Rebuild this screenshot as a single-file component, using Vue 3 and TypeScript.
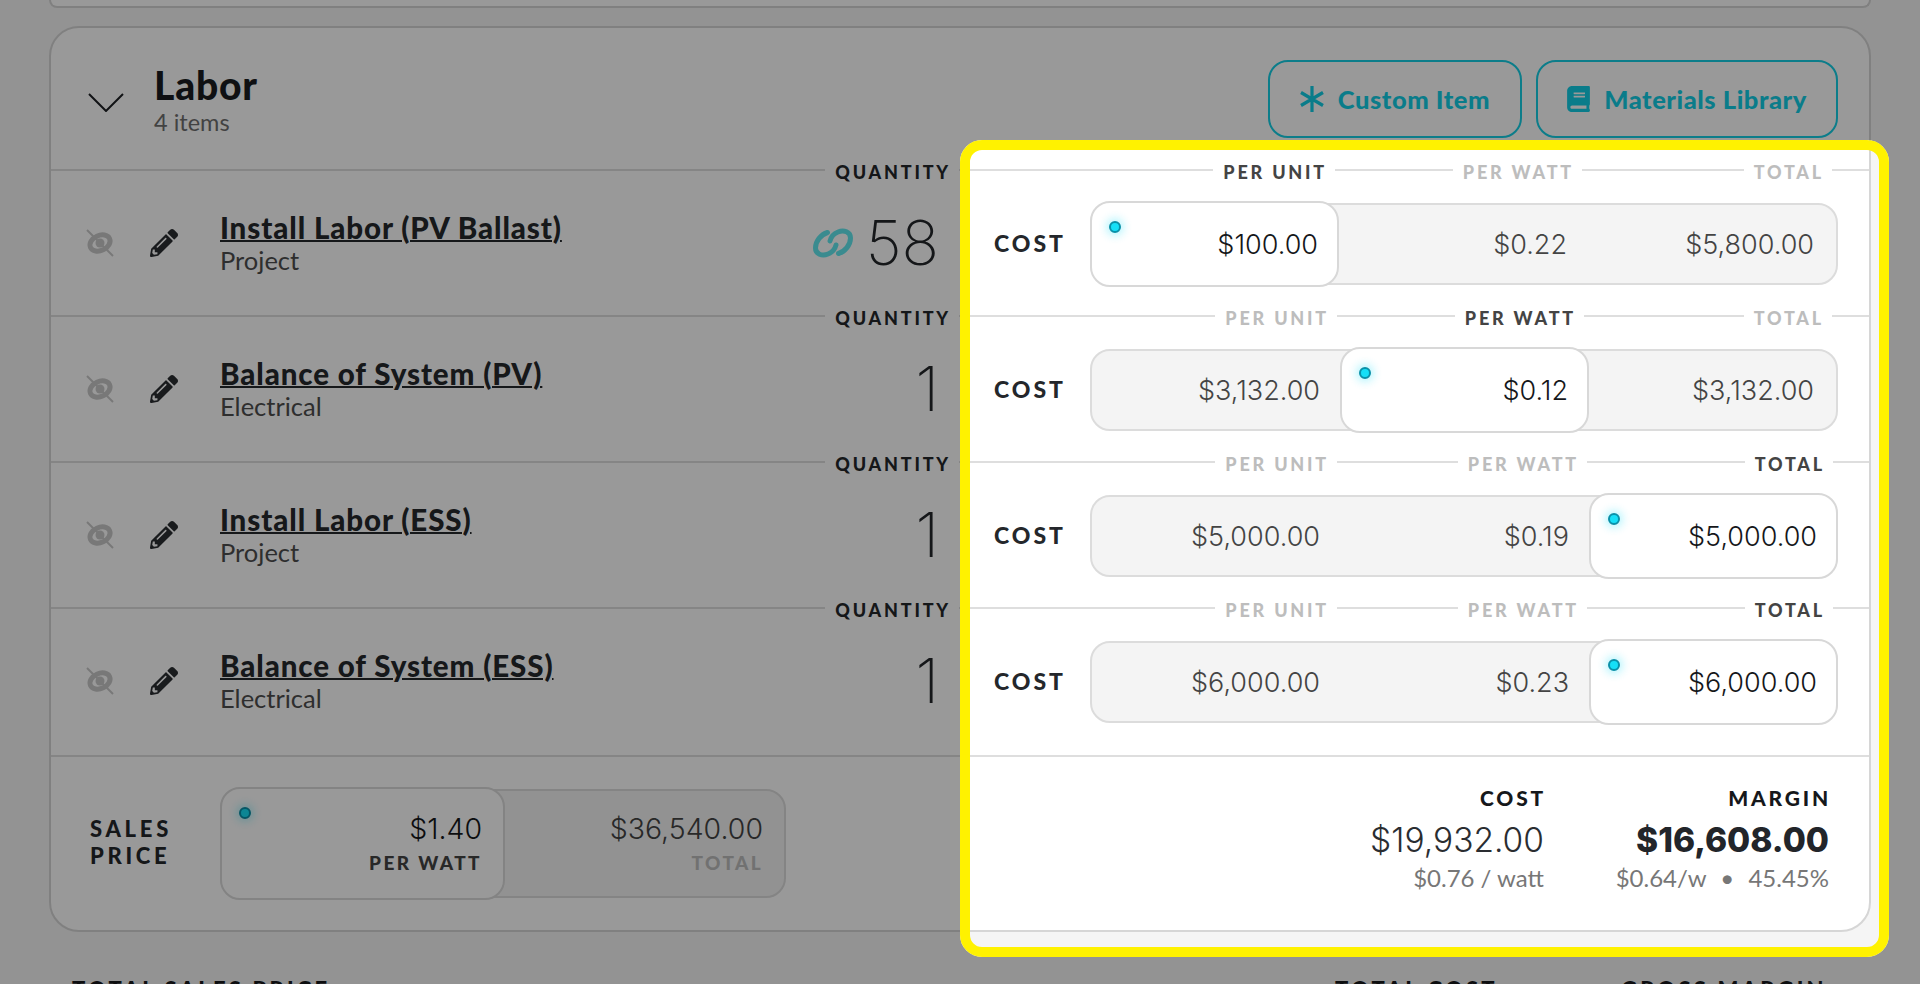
<template>
  <div class="page">
    <div class="prev-card"></div>

    <section class="labor-card">
      <header class="card-head">
        <svg class="chevron" viewBox="0 0 36 19" fill="none" stroke="#1d2024" stroke-width="2"><path d="M1 1l17 17L35 1" /></svg>
        <div class="head-titles">
          <h2>Labor</h2>
          <div class="head-count">4 items</div>
        </div>
        <div class="head-actions">
          <button class="outline-btn custom-btn">
            <svg class="asterisk" viewBox="0 0 24 26" fill="none" stroke="currentColor" stroke-width="3.2"><path d="M12 0v26M1 6.5l22 13M23 6.5l-22 13" /></svg>
            Custom Item
          </button>
          <button class="outline-btn library-btn">
            <svg class="book" viewBox="0 0 448 512" fill="currentColor"><path d="M448 360V24c0-13.3-10.7-24-24-24H96C43 0 0 43 0 96v320c0 53 43 96 96 96h328c13.3 0 24-10.7 24-24v-16c0-7.5-3.5-14.3-8.9-18.7-4.2-15.4-4.2-59.3 0-74.7 5.4-4.3 8.9-11.1 8.9-18.6zM128 134c0-3.3 2.7-6 6-6h212c3.3 0 6 2.7 6 6v20c0 3.3-2.7 6-6 6H134c-3.3 0-6-2.7-6-6v-20zm0 64c0-3.3 2.7-6 6-6h212c3.3 0 6 2.7 6 6v20c0 3.3-2.7 6-6 6H134c-3.3 0-6-2.7-6-6v-20zm253.4 250H96c-17.7 0-32-14.3-32-32 0-17.6 14.4-32 32-32h285.4c-1.9 17.1-1.9 46.9 0 64z" /></svg>
            Materials Library
          </button>
        </div>
      </header>

      <div class="items">
        <div v-for="item in items" :key="item.name" class="item">
          <div class="band">
            <div class="band-col qty-col"><span class="seg"></span><span class="band-label dark">QUANTITY</span></div>
            <div
              v-for="(label, i) in priceLabels"
              :key="label"
              class="band-col"
              :style="{ width: bandWidths[item.active][i] + 'px' }"
            >
              <span class="seg"></span>
              <span class="band-label" :class="{ active: i === item.active }">{{ label }}</span>
            </div>
            <span class="seg"></span>
          </div>

          <div class="item-body">
            <div class="item-left">
              <svg class="eye-icon" viewBox="0 0 28 28" fill="none" stroke="#c9c9c9">
                <ellipse cx="14" cy="14" rx="10.500" ry="7.500" stroke-width="5" transform="rotate(-25 14 14)" />
                <circle cx="14" cy="14" r="4.500" fill="#c9c9c9" stroke="none" />
                <path d="M1 1l26 26" stroke-width="2" />
              </svg>
              <svg class="pencil-icon" viewBox="0 0 512 512" fill="#2a2d31"><path d="M497.9 142.1l-46.1 46.1c-4.7 4.7-12.3 4.7-17 0l-111-111c-4.7-4.7-4.7-12.3 0-17l46.1-46.1c18.7-18.7 49.1-18.7 67.9 0l60.1 60.1c18.8 18.7 18.8 49.1 0 67.9zM284.2 99.8L21.6 362.4.4 483.9c-2.9 16.4 11.4 30.6 27.8 27.8l121.5-21.3 262.6-262.6c4.7-4.7 4.7-12.3 0-17l-111-111c-4.8-4.7-12.4-4.7-17.1 0zM124.1 339.9c-5.5-5.5-5.5-14.3 0-19.8l154-154c5.5-5.5 14.3-5.5 19.8 0s5.5 14.3 0 19.8l-154 154c-5.5 5.5-14.3 5.5-19.8 0zM88 424h48v36.3l-64.5 11.3-31.1-31.1L51.7 376H88v48z" /></svg>
              <div class="item-titles">
                <a class="item-name">{{ item.name }}</a>
                <div class="item-type">{{ item.type }}</div>
              </div>
              <svg v-if="item.linked" class="link-icon" viewBox="0 0 40 30" fill="none" stroke="#62e8ee" stroke-width="5" stroke-linecap="round">
                <path d="M14.500 4.500C8 6.500 2.500 13 2.500 20c0 6 6.500 8.500 12.500 6 4-1.500 7-5 8-9" />
                <path d="M14.500 4.500C8 6.500 2.500 13 2.500 20c0 6 6.500 8.500 12.500 6 4-1.500 7-5 8-9" transform="rotate(180 20 15)" />
              </svg>
              <div class="qty-value">{{ item.qty }}</div>
            </div>

            <div class="item-price">
              <div class="cost-label">COST</div>
              <div class="price-group">
                <div
                  v-for="(value, i) in item.values"
                  :key="i"
                  class="price-cell"
                  :class="{ active: i === item.active, before: i < item.active, after: i > item.active }"
                >
                  <span v-if="i === item.active" class="dot"></span>
                  {{ value }}
                </div>
              </div>
            </div>
          </div>
        </div>
      </div>

      <footer class="card-foot">
        <div class="sales-label">SALES<br />PRICE</div>
        <div class="sales-group">
          <div class="sales-cell active">
            <span class="dot"></span>
            <div class="sales-value">$1.40</div>
            <div class="sales-sub">PER WATT</div>
          </div>
          <div class="sales-cell">
            <div class="sales-value muted">$36,540.00</div>
            <div class="sales-sub faint">TOTAL</div>
          </div>
        </div>
        <div class="summary">
          <div class="summary-col">
            <div class="summary-label">COST</div>
            <div class="summary-value">$19,932.00</div>
            <div class="summary-sub">$0.76 / watt</div>
          </div>
          <div class="summary-col margin-col">
            <div class="summary-label">MARGIN</div>
            <div class="summary-value strong">$16,608.00</div>
            <div class="summary-sub">$0.64/w <i>•</i> 45.45%</div>
          </div>
        </div>
      </footer>
    </section>

    <div class="totals">
      <div class="totals-label sales-total">TOTAL SALES PRICE</div>
      <div class="totals-label cost-total">TOTAL COST</div>
      <div class="totals-label">GROSS MARGIN</div>
    </div>

    <div class="spotlight"></div>
  </div>
</template>

<script setup lang="ts">
interface LaborItem {
  name: string
  type: string
  qty: string
  linked?: boolean
  active: number
  values: string[]
}

const priceLabels = ['PER UNIT', 'PER WATT', 'TOTAL']

// label columns move a little with the cell that is being edited
const bandWidths = [
  [376, 247, 250],
  [378, 247, 248],
  [378, 250, 246]
]

const items: LaborItem[] = [
  { name: 'Install Labor (PV Ballast)', type: 'Project', qty: '58', linked: true, active: 0, values: ['$100.00', '$0.22', '$5,800.00'] },
  { name: 'Balance of System (PV)', type: 'Electrical', qty: '1', active: 1, values: ['$3,132.00', '$0.12', '$3,132.00'] },
  { name: 'Install Labor (ESS)', type: 'Project', qty: '1', active: 2, values: ['$5,000.00', '$0.19', '$5,000.00'] },
  { name: 'Balance of System (ESS)', type: 'Electrical', qty: '1', active: 2, values: ['$6,000.00', '$0.23', '$6,000.00'] }
]
</script>

<style>
html,
body {
  margin: 0;
  background: #f5f5f5;
  overflow: hidden;
}
</style>

<style scoped>
.page {
  position: relative;
  height: 984px;
  overflow: hidden;
  padding: 0 49px;
  box-sizing: border-box;
  background: #f5f5f5;
  font-family: Lato, "Open Sans", sans-serif;
  color: #22252a;
}

.prev-card {
  height: 8px;
  box-sizing: border-box;
  border: 2px solid #d6d6d6;
  border-top: 0;
  border-radius: 0 0 24px 24px;
  background: #fff;
}

/* Card */
.labor-card {
  margin-top: 18px;
  height: 906px;
  box-sizing: border-box;
  border: 2px solid #d6d6d6;
  border-radius: 30px;
  background: #fff;
}

.card-head {
  height: 130px;
  display: flex;
  align-items: flex-start;
  box-sizing: border-box;
  padding-left: 37px;
  padding-right: 31px;
}

.chevron {
  width: 36px;
  height: 19px;
  margin-top: 65px;
}

.head-titles {
  margin-left: 30px;
  margin-top: 35px;
}

.head-titles h2 {
  margin: 0;
  font-size: 39px;
  line-height: 44px;
  font-weight: 900;
  letter-spacing: 0.800px;
  color: #1a1c20;
}

.head-count {
  font-size: 23.500px;
  line-height: 30px;
  color: #6f6f6f;
}

.head-actions {
  margin-left: auto;
  margin-top: 32px;
  display: flex;
  gap: 14px;
}

.outline-btn {
  height: 78px;
  box-sizing: border-box;
  border: 2px solid #14d0e6;
  border-radius: 20px;
  background: transparent;
  color: #12cfe6;
  font-family: inherit;
  font-size: 25.500px;
  font-weight: 900;
  letter-spacing: 0.550px;
  display: flex;
  align-items: center;
  gap: 14px;
  padding: 0;
  justify-content: center;
}

.custom-btn {
  width: 254px;
}

.library-btn {
  width: 302px;
}

.asterisk {
  width: 24px;
  height: 26px;
}

.book {
  width: 23px;
  height: 26px;
}

/* Rows */
.items {
  padding-bottom: 13px;
}

.item {
  height: 146px;
}

.band {
  display: flex;
  align-items: center;
  height: 24px;
}

.band-col {
  display: flex;
  align-items: center;
  flex: none;
}

.qty-col {
  width: 908px;
}

.seg {
  flex: 1;
  height: 2px;
  background: #dedede;
}

.band-label {
  padding: 3px 8px 0 10px;
  font-size: 18px;
  font-weight: 900;
  letter-spacing: 2.800px;
  white-space: nowrap;
  color: #bdbdbd;
}

.band-label.active {
  color: #444;
}

.band-label.dark {
  color: #24272b;
}

.item-body {
  height: 122px;
  display: flex;
  align-items: center;
}

.item-left {
  width: 908px;
  flex: none;
  box-sizing: border-box;
  padding: 0 20px 0 35px;
  display: flex;
  align-items: center;
}

.eye-icon,
.pencil-icon {
  width: 28px;
  height: 28px;
  flex: none;
}

.pencil-icon {
  margin-left: 36px;
}

.item-titles {
  margin-left: 42px;
  margin-top: -1px;
  flex: 1;
}

.item-name {
  font-size: 29.500px;
  line-height: 34px;
  font-weight: 900;
  letter-spacing: 0.900px;
  text-decoration: underline;
  text-decoration-thickness: 2px;
  color: #25282c;
}

.item-type {
  font-size: 25.500px;
  line-height: 30px;
  color: #4e4e4e;
}

.link-icon {
  width: 40px;
  height: 30px;
  margin-right: 13px;
}

.qty-value {
  font-family: Inter, sans-serif;
  font-size: 62px;
  line-height: 66px;
  font-weight: 200;
  color: #24272b;
}

.item-price {
  flex: 1;
  display: flex;
  align-items: center;
  padding-left: 35px;
}

.cost-label {
  width: 96px;
  flex: none;
  font-size: 23px;
  font-weight: 900;
  letter-spacing: 3px;
  color: #24272b;
}

.price-group {
  width: 748px;
  height: 82px;
  margin-top: 2px;
  flex: none;
  display: grid;
  grid-template-columns: 248px 249px 247px;
  box-sizing: border-box;
  border: 2px solid #dcdcdc;
  border-radius: 20px;
  background: #f4f4f4;
}

.price-cell {
  position: relative;
  display: flex;
  align-items: center;
  justify-content: flex-end;
  font-family: Inter, sans-serif;
  font-size: 27px;
  font-weight: 300;
  color: #444;
}

.price-cell.before {
  padding-right: 20px;
}

.price-cell.after {
  padding-right: 22px;
}

.price-cell.active {
  margin: -4px 0;
  padding-right: 19px;
  box-sizing: border-box;
  border: 2px solid #d8d8d8;
  border-radius: 20px;
  background: #fff;
  color: #15171a;
  z-index: 1;
}

.price-cell.active:first-child {
  margin-left: -2px;
  margin-right: 1px;
}

.price-cell.active:last-child {
  margin-right: -2px;
}

.dot {
  position: absolute;
  left: 17px;
  top: 18px;
  width: 12px;
  height: 12px;
  box-sizing: border-box;
  border: 2px solid #0b90a8;
  border-radius: 50%;
  background: #16dff7;
  box-shadow: 0 0 8px 3px rgba(22, 223, 247, 0.3);
}

/* Card footer */
.card-foot {
  position: relative;
  height: 174px;
  box-sizing: border-box;
  border-top: 2px solid #dedede;
  display: flex;
  align-items: center;
  padding: 0 40px 0 39px;
}

.sales-label {
  width: 130px;
  flex: none;
  margin-top: -2px;
  font-size: 22px;
  line-height: 27px;
  font-weight: 900;
  letter-spacing: 3.700px;
  color: #24272b;
}

.sales-group {
  width: 566px;
  height: 109px;
  flex: none;
  display: flex;
  box-sizing: border-box;
  border: 2px solid #dcdcdc;
  border-radius: 20px;
  background: #f4f4f4;
}

.sales-cell {
  flex: 1;
  position: relative;
  text-align: right;
  padding: 20px 21px 0 0;
}

.sales-cell.active {
  margin: -4px -2px;
  padding-top: 22px;
  box-sizing: border-box;
  border: 2px solid #dadada;
  border-radius: 20px;
  background: #fff;
  z-index: 1;
}

.sales-value {
  font-family: Inter, sans-serif;
  font-size: 28.500px;
  line-height: 36px;
  font-weight: 300;
  color: #15171a;
}

.sales-value.muted {
  color: #444;
}

.sales-sub {
  margin-top: 4px;
  font-size: 19px;
  line-height: 24px;
  font-weight: 900;
  letter-spacing: 2.400px;
  color: #444;
}

.sales-sub.faint {
  color: #bdbdbd;
}

.summary {
  margin-left: auto;
  align-self: flex-start;
  padding-top: 29px;
  display: flex;
  gap: 70px;
  text-align: right;
}

.margin-col {
  width: 215px;
}

.summary-label {
  font-size: 21px;
  line-height: 24px;
  font-weight: 900;
  letter-spacing: 2.800px;
  margin-right: -2px;
  color: #16181b;
}

.summary-value {
  margin-top: 7px;
  font-family: Inter, sans-serif;
  font-size: 33.500px;
  line-height: 46px;
  font-weight: 300;
  color: #2a2d31;
}

.summary-value.strong {
  font-weight: 800;
  color: #22252a;
}

.summary-sub {
  margin-top: 0;
  font-size: 24px;
  line-height: 30px;
  color: #777;
}

.summary-sub i {
  font-style: normal;
  margin: 0 8px;
}

/* Totals strip, cut by the bottom of the window */
.totals {
  margin-top: 46px;
  display: flex;
  padding-left: 23px;
}

.totals-label {
  font-size: 22px;
  line-height: 24px;
  font-weight: 900;
  letter-spacing: 3.200px;
  color: #16181b;
}

.sales-total {
  width: 1263px;
}

.cost-total {
  width: 286px;
}

/* Highlight over the dimmed page */
.spotlight {
  position: absolute;
  left: 960px;
  top: 140px;
  z-index: 5;
  width: 929px;
  height: 817px;
  box-sizing: border-box;
  border: 10px solid #fff200;
  border-radius: 22px;
  box-shadow: 0 0 0 2000px rgba(0, 0, 0, 0.4);
  pointer-events: none;
}
</style>
